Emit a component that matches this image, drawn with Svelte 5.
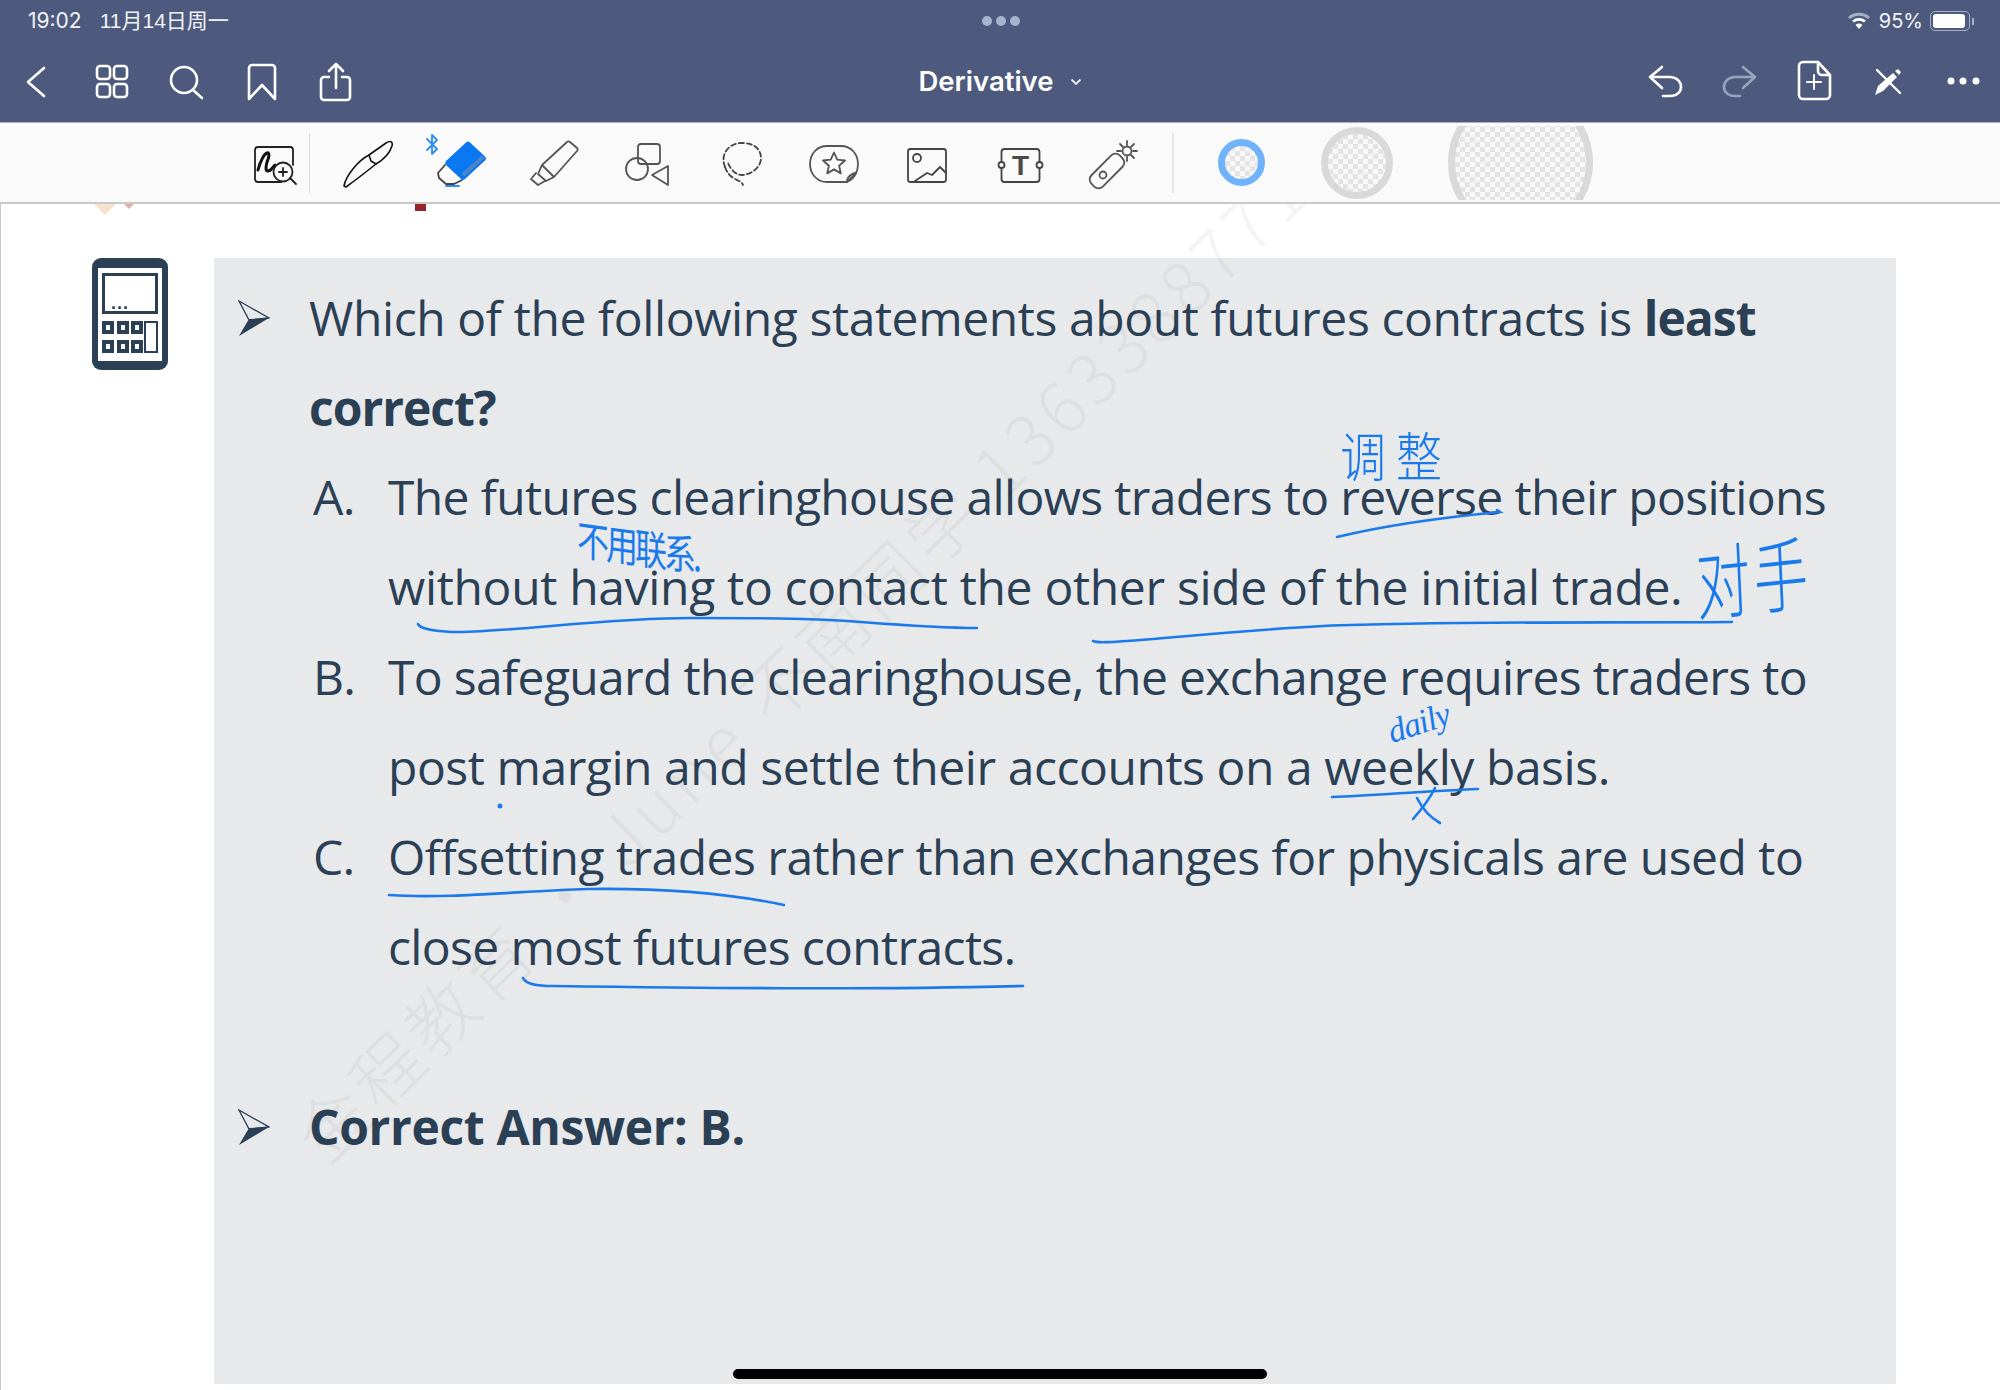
<script>
  // second number of each line is its tracking, the slide font runs a bit narrower than Open Sans
  const options = [
    { label: "A.", lines: [["The futures clearinghouse allows traders to reverse their positions", -0.65], ["without having to contact the other side of the initial trade.", -0.32]] },
    { label: "B.", lines: [["To safeguard the clearinghouse, the exchange requires traders to", -0.65], ["post margin and settle their accounts on a weekly basis.", -0.45]] },
    { label: "C.", lines: [["Offsetting trades rather than exchanges for physicals are used to", -0.53], ["close most futures contracts.", -0.65]] },
  ];
  const keys = [102, 116, 130];
  const star = "M834 152.5l3.2 7.2 7.8.8-5.9 5.2 1.7 7.7-6.8-4-6.8 4 1.7-7.7-5.9-5.2 7.8-.8z";
</script>

<div class="screen">
  <div class="chrome">
    <div class="status">
      <div class="clock"><span>19:02</span><span class="date">11月14日周一</span></div>
      <div class="dots"><i></i><i></i><i></i></div>
      <div class="state">
        <svg width="24" height="20" viewBox="1849 11 24 20">
          <path d="M1851 18a15 15 0 0 1 20 0" fill="none" stroke="#a7afc3" stroke-width="3" />
          <path d="M1855 21.5a9.5 9.5 0 0 1 12 0" fill="none" stroke="#fff" stroke-width="2.6" />
          <path d="M1857.5 25a5.5 5.5 0 0 1 7 0l-3.5 4z" fill="#fff" />
        </svg>
        <span class="pct">95%</span>
        <div class="battery"><b></b></div>
        <div class="nub"></div>
      </div>
    </div>

    <div class="nav">
      <div class="group">
        <svg viewBox="0 60 75 62"><path d="M44 68 28 82l16 14" /></svg>
        <svg viewBox="75 60 75 62">
          <rect x="97" y="66" width="13" height="13" rx="3" /><rect x="114" y="66" width="13" height="13" rx="3" />
          <rect x="97" y="84" width="13" height="13" rx="3" /><rect x="114" y="84" width="13" height="13" rx="3" />
        </svg>
        <svg viewBox="150 60 75 62"><circle cx="184" cy="80" r="13" /><path d="m193 90 9 8" /></svg>
        <svg viewBox="225 60 75 62"><path d="M249 68a3 3 0 0 1 3-3h20a3 3 0 0 1 3 3v31l-13-14-13 14z" /></svg>
        <svg viewBox="300 60 75 62">
          <path d="M329 77h-5a3 3 0 0 0-3 3v17a3 3 0 0 0 3 3h23a3 3 0 0 0 3-3V80a3 3 0 0 0-3-3h-5" />
          <path d="M336 88V64m-7 7 7-7 7 7" />
        </svg>
      </div>
      <div class="title">
        Derivative
        <svg class="caret" width="12" height="8" viewBox="0 0 12 8"><path d="m1.500 1.500 4.500 4.500 4.500-4.500" /></svg>
      </div>
      <div class="group end">
        <svg viewBox="1625 60 75 62"><path d="m1662 67-12 10 12 11M1650 77h20c7 0 11 5 11 10s-4 9-11 9h-7" /></svg>
        <svg class="off" viewBox="1700 60 75 62"><path d="m1743 67 12 10-12 11M1755 77h-20c-7 0-11 5-11 10s4 9 11 9h5" /></svg>
        <svg viewBox="1775 60 75 62">
          <path d="M1818 62h-15a4 4 0 0 0-4 4v29a4 4 0 0 0 4 4h23a4 4 0 0 0 4-4V75l-12-13v9a4 4 0 0 0 4 4h8" />
          <path d="M1814 75v14m-7-7h14" stroke-width="2" />
        </svg>
        <svg viewBox="1850 60 75 62">
          <path d="m1877 70 23 23" stroke-width="2.4" />
          <path class="solid" d="m1875 95 3-9 15-13 4 4-14 14zM1895 71l3-2 3 3-2 3z" />
        </svg>
        <svg viewBox="1925 60 75 62"><circle class="solid" cx="1951" cy="81" r="3.500" /><circle class="solid" cx="1963" cy="81" r="3.500" /><circle class="solid" cx="1976" cy="81" r="3.500" /></svg>
      </div>
    </div>

    <div class="toolbar">
      <div class="first">
        <svg viewBox="245 133 60 60">
          <path d="M281 182h-23a3 3 0 0 1-3-3v-29a3 3 0 0 1 3-3h32a3 3 0 0 1 3 3v15" stroke="#222" />
          <path d="M258 170c2-8 6-16 9-17 3-1 2 5 0 9-1 4-2 9 1 9 3 0 5-4 7-6" stroke="#111" stroke-width="3" />
          <circle cx="283" cy="172" r="9.500" fill="#fafafa" stroke="#222" />
          <path d="m290 178 6 6M283 168v8m-4-4h8" stroke="#222" />
        </svg>
      </div>
      <div class="sep"></div>
      <div class="tool">
        <svg viewBox="337 133 60 60">
          <path d="M343 186c2-11 15-26 25-31l17-12c5-3 7-1 6 3-3 9-9 14-16 18-10 8-23 18-30 23z" stroke="#111" stroke-width="1.600" />
          <path d="m368 155 2 6 5 3" stroke="#111" stroke-width="1.600" />
        </svg>
      </div>
      <div class="tool">
        <svg viewBox="430 133 60 60">
          <path d="m426 139 10 10-5 5v-19l5 5-10 10" stroke="#2a8cf5" />
          <path d="m444 165-7 8 1 5 7 6h8l8-4" stroke="#444" />
          <path d="M465 142.500a3 3 0 0 1 4 0l15 14a3 3 0 0 1 0 4l-20 18.500a3 3 0 0 1-4 0l-15-14a3 3 0 0 1 0-4z" fill="#0a78f0" stroke="none" />
          <path d="m463 174 18-16" stroke="#4a85c8" stroke-width="4" />
          <path d="M445 186h13" stroke="#2a8cf5" />
        </svg>
      </div>
      <div class="tool">
        <svg viewBox="525 133 60 60">
          <path d="M568 142a2 2 0 0 1 3 0l7 6a2 2 0 0 1 0 3l-23 26-12-12zM543 165l-4 9 8 7 8-4M537 173l-5 6 7 6 7-4" stroke="#555" />
        </svg>
      </div>
      <div class="tool">
        <svg viewBox="618 133 60 60">
          <rect x="638" y="144" width="22" height="20" rx="3" stroke="#555" />
          <circle cx="637" cy="169" r="11" stroke="#555" />
          <path d="M668 166v19l-16-10z" stroke="#555" />
        </svg>
      </div>
      <div class="tool">
        <svg viewBox="711 133 60 60">
          <path d="M725 167c-5-12 3-24 17-24 13 0 19 7 19 15 0 10-11 17-19 17-6 0-11-5-14-12" stroke="#444" stroke-dasharray="5 3" />
          <path d="M725 167c2 6 6 10 10 12s7 3 8 6" stroke="#444" stroke-dasharray="5 3" />
        </svg>
      </div>
      <div class="tool">
        <svg viewBox="804 133 60 60">
          <path d="M847 182h-20c-10 0-17-8-17-18s7-18 17-18h14c10 0 17 8 17 18 0 4-1 7-2 9z" stroke="#555" />
          <path d="M847 182c3-1 8-5 9-9-3 0-9 3-9 9z" stroke="#555" />
          <path d={star} stroke="#555" />
        </svg>
      </div>
      <div class="tool">
        <svg viewBox="897 133 60 60">
          <rect x="908" y="149" width="38" height="33" rx="2.500" stroke="#444" />
          <circle cx="917" cy="158" r="4" stroke="#444" />
          <path d="m915 181 12-8 5 2 8-8 6 6" stroke="#444" />
        </svg>
      </div>
      <div class="tool">
        <svg viewBox="991 133 60 60">
          <path d="M1001.500 162v-10a3 3 0 0 1 3-3h32a3 3 0 0 1 3 3v10M1001.500 168v11a3 3 0 0 0 3 3h32a3 3 0 0 0 3-3v-11" stroke="#444" />
          <circle cx="1001.500" cy="165" r="3" stroke="#444" /><circle cx="1039.500" cy="165" r="3" stroke="#444" />
          <text x="1020.500" y="175" text-anchor="middle" class="letter">T</text>
        </svg>
      </div>
      <div class="tool">
        <svg viewBox="1084 133 60 60">
          <rect x="1087" y="163" width="40" height="16" rx="6" transform="rotate(-45 1107 171)" stroke="#555" />
          <circle cx="1103" cy="175" r="3.500" stroke="#555" />
          <circle cx="1127" cy="151" r="4.500" stroke="#555" />
          <path d="M1127 141v4m0 12v4m-10-10h4m12 0h4m-17-7 3 3m8 8 3 3m0-14-3 3" stroke="#555" />
        </svg>
      </div>
      <div class="sep last"></div>
      <div class="ring small"></div>
      <div class="ring mid"></div>
      <div class="clip"><div class="ring big"></div></div>
    </div>
  </div>

  <div class="page">
    <div class="calc">
      <div class="frame">
        <div class="display"><span>...</span></div>
        <div class="pad">
          <div class="keys">
            {#each [0, 1] as row}
              {#each keys as k}
                <i></i>
              {/each}
            {/each}
          </div>
          <div class="tall"></div>
        </div>
      </div>
    </div>

    <div class="panel">
      <div class="row">
        <svg class="arrow" width="32" height="36" viewBox="0 0 32 36">
          <path d="M1 1 31 18 11 20z" fill="none" stroke="#2b3f55" stroke-width="1.300" />
          <path d="M11 19 31 18 1 36z" fill="#2b3f55" />
        </svg>
        <p class="question">Which of the following statements about futures contracts is <b>least</b><br /><b>correct?</b></p>
      </div>
      <div class="options">
        {#each options as o}
          <div class="option">
            <span>{o.label}</span>
            <p>
              {#each o.lines as [text, track]}
                <span class="line" style="letter-spacing: {track}px">{text}</span>
              {/each}
            </p>
          </div>
        {/each}
      </div>
      <div class="row answer">
        <svg class="arrow" width="32" height="36" viewBox="0 0 32 36">
          <path d="M1 1 31 18 11 20z" fill="none" stroke="#2b3f55" stroke-width="1.300" />
          <path d="M11 19 31 18 1 36z" fill="#2b3f55" />
        </svg>
        <p><b>Correct Answer: B.</b></p>
      </div>
    </div>
  </div>

  <div class="mark">金程教育 · June 不南同学 1363388771</div>

  <div class="remnant peach"></div>
  <div class="remnant pink"></div>
  <div class="remnant red"></div>

  <svg class="ink" width="2000" height="1390" viewBox="0 0 2000 1390">
    <path d="M1337 537c50-12 110-20 163-25l-3-2" />
    <path d="M418 624c2 6 25 8 41 8 60-1 150-14 232-14 60 0 120 0 170 4 40 3 90 6 116 6" />
    <path d="M1093 641c4 2 12 1 20 1 60-4 130-12 210-16 120-5 270-3 409-4" />
    <path d="M1332 797c45-2 95-6 146-8" />
    <path d="M1435 788c-6 12-14 22-22 31M1417 798c6 12 14 20 23 25" />
    <path d="M389 895c60 4 130-4 198-6 70-1 140 4 197 16" />
    <path d="M523 978c3 6 12 8 30 8 150 2 310 4 470 0" />
    <circle cx="500" cy="806" r="1.200" fill="#1a7aec" />
  </svg>

  <span class="note tiao">调整</span>
  <span class="note buyong">不用联系.</span>
  <span class="note duishou">对手</span>
  <span class="note daily">daily</span>

  <div class="home"></div>
</div>

<style>
  :global(body) {
    margin: 0;
  }

  .screen {
    position: relative;
    width: 2000px;
    height: 1390px;
    overflow: hidden;
    background: #fff;
    font-family: "Open Sans", "Noto Sans CJK SC", sans-serif;
  }

  /* top bars */
  .chrome {
    position: relative;
    z-index: 2;
  }

  .status {
    display: grid;
    grid-template-columns: 1fr auto 1fr;
    align-items: center;
    height: 42px;
    padding: 0 26px 18px 28px;
    background: #4d5a7d;
    color: #f2f3f6;
    font-family: Inter, "Noto Sans CJK SC", sans-serif;
    font-size: 21px;
  }

  .clock {
    display: flex;
    align-items: center;
    gap: 18px;
    height: 24px;
    line-height: 24px;
  }

  .date {
    font-family: "Liberation Sans", "Noto Sans CJK SC", sans-serif;
  }

  .dots {
    display: flex;
    gap: 4px;
  }

  .dots i {
    width: 10px;
    height: 10px;
    border-radius: 50%;
    background: #a6b2cf;
  }

  .state {
    display: flex;
    align-items: center;
    justify-content: flex-end;
    gap: 5px;
  }

  .pct {
    font-size: 20px;
    margin-left: 3px;
  }

  .battery {
    box-sizing: border-box;
    width: 40px;
    height: 20px;
    padding: 2px;
    border: 1.500px solid #a7afc3;
    border-radius: 5px;
    margin-left: 2px;
  }

  .battery b {
    display: block;
    width: 32px;
    height: 100%;
    border-radius: 3px;
    background: #fff;
  }

  .nub {
    width: 2px;
    height: 7px;
    margin-left: -3px;
    background: #a7afc3;
  }

  .nav {
    display: grid;
    grid-template-columns: 1fr auto 1fr;
    align-items: center;
    height: 62px;
    background: #4d5a7d;
    border-bottom: 1px solid #a9b0bf;
  }

  .group {
    display: flex;
  }

  .group.end {
    justify-content: flex-end;
  }

  .group svg {
    display: block;
    width: 75px;
    height: 62px;
    fill: none;
    stroke: #fff;
    stroke-width: 2.600;
    stroke-linecap: round;
    stroke-linejoin: round;
  }

  .group svg.off {
    stroke: #98a3bc;
  }

  .group .solid {
    fill: #fff;
    stroke: none;
  }

  .title {
    display: flex;
    align-items: center;
    gap: 16px;
    padding-bottom: 20px;
    color: #fff;
    font-family: Inter, sans-serif;
    font-size: 27.500px;
    font-weight: 600;
  }

  .caret {
    fill: none;
    stroke: #e8eaf0;
    stroke-width: 1.800;
    margin-top: 2px;
  }

  /* drawing tools */
  .toolbar {
    display: flex;
    align-items: center;
    box-sizing: border-box;
    height: 81px;
    padding-left: 245px;
    background: #fafafa;
    border-bottom: 2px solid #c9c9c9;
  }

  .first,
  .tool {
    flex: none;
  }

  .first {
    width: 60px;
  }

  .tool {
    display: flex;
    justify-content: center;
    width: 93.300px;
  }

  .toolbar svg {
    display: block;
    width: 60px;
    height: 60px;
    overflow: visible;
    fill: none;
    stroke-width: 1.800;
    stroke-linejoin: round;
    stroke-linecap: round;
  }

  .letter {
    fill: #4a4a4a;
    stroke: none;
    font-family: "Liberation Sans", sans-serif;
    font-size: 28px;
    font-weight: 700;
  }

  .sep {
    flex: none;
    width: 1px;
    height: 60px;
    margin: 0 11px 0 4px;
    background: #dedede;
  }

  .sep.last {
    width: 2px;
    margin: 0 0 0 11px;
    background: #e6e6e6;
  }

  .ring {
    flex: none;
    box-sizing: border-box;
    border-radius: 50%;
    border: 7px solid #d9d9d9;
    background: repeating-conic-gradient(#e4e4e4 0 25%, #f8f8f8 0 50%) 0 0 / 10px 10px;
  }

  .ring.small {
    width: 47px;
    height: 47px;
    margin-left: 44px;
    border-color: #6eb3fb;
  }

  .ring.mid {
    width: 72px;
    height: 72px;
    margin-left: 56px;
  }

  .clip {
    flex: none;
    display: flex;
    align-items: center;
    height: 74px;
    margin-left: 55px;
    overflow: hidden;
  }

  .ring.big {
    width: 145px;
    height: 145px;
  }

  /* slide */
  .page {
    display: flex;
    box-sizing: border-box;
    height: 1186px;
    padding: 54px 0 0 91px;
    border-left: 1px solid #c9c9c9;
    color: #2b3f55;
  }

  .calc {
    flex: none;
    box-sizing: border-box;
    width: 76px;
    height: 112px;
    padding: 10px 6px 9px;
    border-radius: 9px;
    background: #2b3f55;
  }

  .frame {
    display: flex;
    flex-direction: column;
    gap: 7px;
    box-sizing: border-box;
    height: 100%;
    padding: 5px 4px;
    background: #fff;
  }

  .display {
    display: flex;
    align-items: flex-end;
    box-sizing: border-box;
    height: 41px;
    padding: 0 0 0 6px;
    border: 3px solid #2b3f55;
    font-family: "Liberation Sans", sans-serif;
    font-weight: 700;
    font-size: 18px;
    line-height: 16px;
    letter-spacing: 1px;
  }

  .pad {
    display: flex;
    justify-content: space-between;
  }

  .keys {
    display: grid;
    grid-template-columns: repeat(3, 12px);
    gap: 5px 2.500px;
  }

  .keys i {
    box-sizing: border-box;
    width: 12px;
    height: 13px;
    border: 4px solid #2b3f55;
  }

  .tall {
    box-sizing: border-box;
    width: 14px;
    height: 32px;
    border: 2.500px solid #2b3f55;
  }

  .panel {
    flex: none;
    box-sizing: border-box;
    width: 1682px;
    height: 1126px;
    margin-left: 46px;
    padding: 15px 0 0 24px;
    background: #e8e9eb;
    font-size: 48px;
    line-height: 90px;
    white-space: nowrap;
    letter-spacing: -0.650px;
  }

  .panel p {
    margin: 0;
  }

  .panel b {
    font-weight: 700;
    letter-spacing: -0.350px;
  }

  .panel .question {
    letter-spacing: -0.400px;
  }

  .panel .question b {
    letter-spacing: -1px;
  }

  .row {
    display: flex;
    align-items: flex-start;
    gap: 39px;
  }

  .arrow {
    flex: none;
    margin-top: 27px;
  }

  .options {
    margin-top: -1px;
  }

  .option {
    display: flex;
    padding-left: 75px;
  }

  .option > span {
    width: 75px;
  }

  .line {
    display: block;
  }

  .answer {
    margin-top: 90px;
  }

  /* watermark and what shows over the slide */
  .mark {
    position: absolute;
    left: 305px;
    top: 1095px;
    transform-origin: 0 50%;
    transform: rotate(-44.500deg);
    color: rgba(40, 50, 60, 0.055);
    font-family: "Noto Sans CJK SC", sans-serif;
    font-size: 70px;
    font-weight: 300;
    letter-spacing: 6px;
    white-space: nowrap;
  }

  .remnant {
    position: absolute;
    top: 204px;
  }

  .peach {
    left: 94px;
    width: 0;
    height: 0;
    border: 11px solid transparent;
    border-top-color: #f7e3cd;
    border-bottom: 0;
  }

  .pink {
    left: 124px;
    width: 0;
    height: 0;
    border: 5px solid transparent;
    border-top-color: #e2b0ad;
    border-bottom: 0;
  }

  .red {
    left: 415px;
    width: 11px;
    height: 7px;
    background: #93242a;
  }

  .ink {
    position: absolute;
    left: 0;
    top: 0;
    fill: none;
    stroke: #1a7aec;
    stroke-width: 2.600;
    stroke-linecap: round;
    pointer-events: none;
  }

  .note {
    position: absolute;
    color: #1a7aec;
    font-family: "Noto Sans CJK SC", sans-serif;
    line-height: 1;
    white-space: nowrap;
  }

  .tiao {
    left: 1340px;
    top: 428px;
    font-size: 46px;
    letter-spacing: 10px;
    font-weight: 300;
    transform-origin: 0 0;
    transform: scaleY(1.150);
  }

  .buyong {
    left: 577px;
    top: 516px;
    font-size: 32px;
    letter-spacing: -3px;
    transform-origin: 0 0;
    transform: scaleY(1.300) skewY(6deg);
  }

  .duishou {
    left: 1694px;
    top: 540px;
    font-size: 54px;
    font-weight: 300;
    letter-spacing: 4px;
    transform-origin: 0 0;
    transform: scaleY(1.500) rotate(-4deg);
  }

  .daily {
    left: 1387px;
    top: 706px;
    font-family: "Liberation Serif", serif;
    font-style: italic;
    font-size: 34px;
    letter-spacing: -1px;
    transform: rotate(-18deg);
  }

  .home {
    position: absolute;
    left: 733px;
    top: 1369px;
    width: 534px;
    height: 10px;
    border-radius: 5px;
    background: #000;
  }
</style>
